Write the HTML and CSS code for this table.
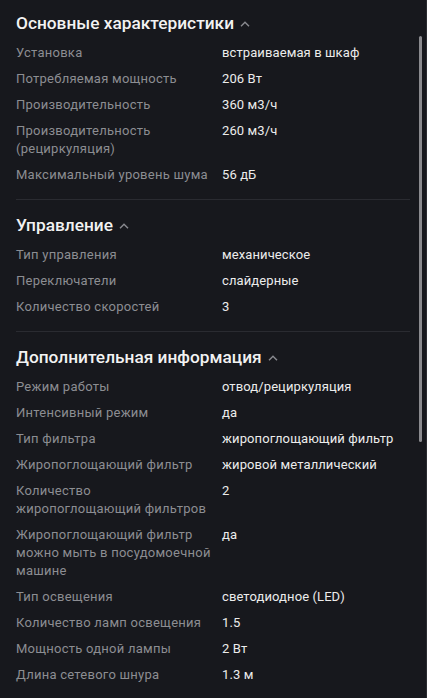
FILE: index.html
```html
<!DOCTYPE html>
<html lang="ru">
<head>
<meta charset="utf-8">
<link rel="stylesheet" href="styles.css">
</head>
<body>
<div class="page">
  <section class="group">
    <h2 class="title">Основные характеристики <svg class="chev" viewBox="0 0 10 6" width="10" height="6"><path d="M1 5.2 L5 1.2 L9 5.2" /></svg></h2>
    <dl class="specs">
      <dt>Установка</dt><dd>встраиваемая в шкаф</dd>
      <dt>Потребляемая мощность</dt><dd>206 Вт</dd>
      <dt>Производительность</dt><dd>360 м3/ч</dd>
      <dt>Производительность<br>(рециркуляция)</dt><dd>260 м3/ч</dd>
      <dt>Максимальный уровень шума</dt><dd>56 дБ</dd>
    </dl>
  </section>
  <section class="group">
    <h2 class="title">Управление <svg class="chev" viewBox="0 0 10 6" width="10" height="6"><path d="M1 5.2 L5 1.2 L9 5.2" /></svg></h2>
    <dl class="specs">
      <dt>Тип управления</dt><dd>механическое</dd>
      <dt>Переключатели</dt><dd>слайдерные</dd>
      <dt>Количество скоростей</dt><dd>3</dd>
    </dl>
  </section>
  <section class="group">
    <h2 class="title">Дополнительная информация <svg class="chev" viewBox="0 0 10 6" width="10" height="6"><path d="M1 5.2 L5 1.2 L9 5.2" /></svg></h2>
    <dl class="specs">
      <dt>Режим работы</dt><dd>отвод/рециркуляция</dd>
      <dt>Интенсивный режим</dt><dd>да</dd>
      <dt>Тип фильтра</dt><dd>жиропоглощающий фильтр</dd>
      <dt>Жиропоглощающий фильтр</dt><dd>жировой металлический</dd>
      <dt>Количество<br>жиропоглощающий фильтров</dt><dd>2</dd>
      <dt>Жиропоглощающий фильтр<br>можно мыть в посудомоечной<br>машине</dt><dd>да</dd>
      <dt>Тип освещения</dt><dd>светодиодное (LED)</dd>
      <dt>Количество ламп освещения</dt><dd>1.5</dd>
      <dt>Мощность одной лампы</dt><dd>2 Вт</dd>
      <dt>Длина сетевого шнура</dt><dd>1.3 м</dd>
    </dl>
  </section>
  <div class="scrollbar"></div>
</div>
</body>
</html>
```
FILE: styles.css
```css
html, body {
  margin: 0;
  padding: 0;
  background: #17181d;
}
body {
  font-family: Roboto, "Noto Sans", sans-serif;
  color: #ececec;
  overflow: hidden;
}
.page {
  position: relative;
  padding: 11px 16px 0 16px;
  height: 698px;
  box-sizing: border-box;
  border-right: 1px solid #2a2b30;
}
.group {
  padding-bottom: 15px;
  border-bottom: 1px solid #2a2b31;
  margin-bottom: 13px;
}
.group:last-of-type {
  border-bottom: none;
}
.title {
  margin: 0;
  font-size: 17.3px;
  font-weight: 500;
  line-height: 24px;
  color: #f2f2f2;
  display: flex;
  align-items: center;
  gap: 6px;
}
.chev {
  fill: none;
  stroke: #8a8b90;
  stroke-width: 1.4;
  margin-top: 1px;
}
.specs {
  margin: 9px 0 0 0;
  display: grid;
  grid-template-columns: 206px 1fr;
  row-gap: 8px;
  font-size: 13px;
  line-height: 18px;
}
.specs dt {
  color: #8c8d92;
  letter-spacing: 0.25px;
}
.specs dd {
  margin: 0;
  color: #ececec;
  letter-spacing: 0.1px;
}
.scrollbar {
  position: absolute;
  right: 4px;
  top: 36px;
  width: 3px;
  height: 406px;
  border-radius: 2px;
  background: #8a8a8e;
}
```
